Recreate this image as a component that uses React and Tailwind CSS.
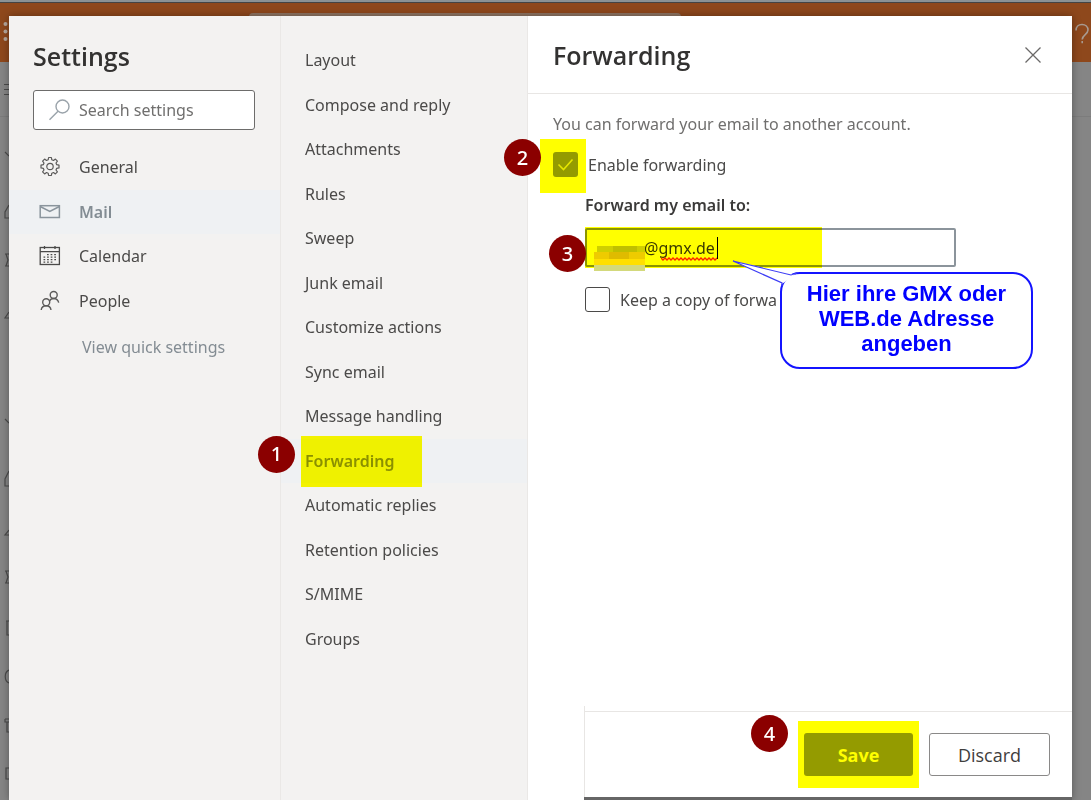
import React from "react";

const categories = [
  { name: "General", icon: GearIcon },
  { name: "Mail", icon: MailIcon, active: true },
  { name: "Calendar", icon: CalendarIcon },
  { name: "People", icon: PeopleIcon },
];

const pages = [
  "Layout",
  "Compose and reply",
  "Attachments",
  "Rules",
  "Sweep",
  "Junk email",
  "Customize actions",
  "Sync email",
  "Message handling",
  "Forwarding",
  "Automatic replies",
  "Retention policies",
  "S/MIME",
  "Groups",
];

function GearIcon() {
  return (
    <svg width="22" height="22" viewBox="0 0 22 22" fill="none" stroke="#5c5b5a" strokeWidth="1.2" strokeLinejoin="round" aria-hidden="true">
      <path d="M9.6 1.5h2.8l.4 2.3 1.7.7 1.9-1.4 2 2-1.4 1.9.7 1.7 2.3.4v2.8l-2.3.4-.7 1.7 1.4 1.9-2 2-1.9-1.4-1.7.7-.4 2.3H9.6l-.4-2.3-1.7-.7-1.9 1.4-2-2 1.4-1.9-.7-1.7-2.3-.4V9.1l2.3-.4.7-1.7-1.4-1.9 2-2 1.9 1.4 1.7-.7z" />
      <circle cx="11" cy="10.5" r="3.2" />
    </svg>
  );
}

function MailIcon() {
  return (
    <svg width="22" height="22" viewBox="0 0 22 22" fill="none" stroke="#8a949c" strokeWidth="1.5" aria-hidden="true">
      <rect x="1.2" y="4.7" width="19.2" height="11.8" />
      <path d="M1.2 5.5l9.6 5 9.6-5" />
    </svg>
  );
}

function CalendarIcon() {
  return (
    <svg width="22" height="22" viewBox="0 0 22 22" fill="none" stroke="#4b4a49" strokeWidth="1.3" aria-hidden="true">
      <rect x="1.2" y="2.5" width="19.2" height="17" />
      <path d="M1 6.7h19.5M5.5 1v3M16 1v3" />
      <path d="M8 9.7h9.5M4.500 12.200h13M4.500 14.700h13M4.500 17.100h9.500" strokeDasharray="1.7 1.9" />
    </svg>
  );
}

function PeopleIcon() {
  return (
    <svg width="22" height="22" viewBox="0 0 22 22" fill="none" stroke="#5c5b5a" strokeWidth="1.4" aria-hidden="true">
      <circle cx="14.7" cy="5" r="3.500" />
      <circle cx="7.2" cy="12.200" r="3.500" />
      <path d="M10.400 11.300c.8-1.700 2.300-2.800 4.300-2.800 2.700 0 4.400 1.600 5 4.200M2.200 20c.3-2.600 2.300-4.300 5-4.300s4.500 1.700 4.800 4.300" />
    </svg>
  );
}

function Badge({ n, className }) {
  return (
    <span className={`absolute z-10 flex size-[37px] items-center justify-center rounded-full bg-[#8b0000] text-xl leading-none font-medium text-white ${className}`}>
      {n}
    </span>
  );
}

function Backdrop() {
  return (
    <div className="absolute inset-0 bg-[#858585]" aria-hidden="true">
      <div className="h-[3px] border-b border-[#444] bg-[#8b9294]" />
      <div className="flex h-[59px] items-start justify-end bg-[#8e481c]">
        <div className="absolute top-[13px] left-[249px] h-4 w-[432px] rounded-sm bg-[#8f7563]" />
        <svg className="mt-[18px]" width="18" height="26" viewBox="0 0 18 26" fill="none" stroke="#a89a90" strokeWidth="1.6">
          <path d="M3 9.5C3 5.8 5.5 3.5 9 3.5s6 2.200 6 5.600c0 4.400-5.800 4.500-5.800 9.400M9.200 20v2.200" />
        </svg>
      </div>
      <div className="h-[55px] border-b border-[#7c7c7c]" />
      <svg className="absolute top-0 left-0" width="9" height="800" viewBox="0 0 9 800" fill="none" stroke="#4b4b4b" strokeWidth="1.2">
        <g fill="#b5a69b" stroke="none">
          <circle cx="5.500" cy="24" r="2" />
          <circle cx="5.500" cy="31.500" r="2" />
          <circle cx="5.500" cy="39" r="2" />
        </g>
        <path d="M4 84.500h5M4 89.500h5M4 94.500h5M5 152l4 4M9 205l-4 7v6h4M5 254h4M6 254l2 6-2 6M5 266h4M9 312l-4 6h4M5 419l4 4M9 471l-4 8v7h4M9 530l-4 5h4M5 571h4M6 571l2 6-2 6M5 583h4M6 621h3M7 621v14h2M9 670c-5 2-5 11 0 13M5 719h4M5 719v3h4M7 722v10h2M9 768H6v11h3" />
      </svg>
    </div>
  );
}

function CategoryNav() {
  return (
    <nav className="w-[272px] shrink-0 border-r border-[#eae8e6] bg-[#f3f2f1]" aria-label="Settings categories">
      <h1 className="mt-6 ml-6 font-['Open_Sans',sans-serif] text-[25px] leading-8 font-semibold text-[#333231]">Settings</h1>
      <div className="relative mt-[18px] mr-[25px] ml-6">
        <svg className="absolute top-2 left-[15px]" width="24" height="24" viewBox="0 0 24 24" fill="none" stroke="#9aa3aa" strokeWidth="1.4" aria-hidden="true">
          <circle cx="14.5" cy="8.5" r="6.5" />
          <path d="M10 13.2L1.5 21.7" />
        </svg>
        <input
          type="search"
          aria-label="Search settings"
          placeholder="Search settings"
          className="h-10 w-full rounded-[3px] border border-[#6d6c6b] bg-white pl-[45px] text-base text-[#333231] outline-none placeholder:text-[#706f6e]"
        />
      </div>
      <ul className="mt-[15px] grid h-[178px] auto-rows-fr">
        {categories.map(({ name, icon: Icon, active }) => (
          <li key={name}>
            <a
              href="#"
              aria-current={active ? "true" : undefined}
              className={`flex h-full items-center gap-[18px] pl-[30px] text-base ${active ? "bg-[#eff1f3] font-semibold text-[#838c93]" : "text-[#4b4a49]"}`}
            >
              <Icon />
              {name}
            </a>
          </li>
        ))}
      </ul>
      <a href="#" className="mt-3 ml-[73px] inline-block text-base leading-6 text-[#838c93]">
        View quick settings
      </a>
    </nav>
  );
}

function PageNav() {
  return (
    <nav className="w-[247px] shrink-0 border-r border-[#eae8e6] bg-[#f3f2f1]" aria-label="Mail settings">
      <ul className="mt-[22px] grid h-[623px] auto-rows-fr">
        {pages.map((name) => {
          const active = name === "Forwarding";
          return (
            <li key={name} className="relative">
              <a
                href="#"
                aria-current={active ? "page" : undefined}
                className={`flex h-full items-center pl-6 text-base ${active ? "bg-[#eff1f3] font-semibold text-[#8b9095]" : "text-[#4b4a49]"}`}
              >
                {name}
              </a>
              {active && (
                <>
                  <span className="pointer-events-none absolute -top-[3px] left-5 h-[51px] w-[121px] bg-[#ffff00] mix-blend-multiply" />
                  <Badge n={1} className="-top-[3px] -left-[23px]" />
                </>
              )}
            </li>
          );
        })}
      </ul>
    </nav>
  );
}

function Callout() {
  return (
    <div className="absolute top-[44px] left-[195px] z-10 flex h-[97px] w-[253px] justify-center rounded-[20px] border-2 border-[#1414ff] bg-white pt-[7px]">
      <svg className="absolute -top-[15px] -left-[51px]" width="70" height="40" viewBox="0 0 70 40" aria-hidden="true">
        <path d="M2 2L64 15.5L51 25Z" fill="#fff" />
        <path d="M51 27V24L2 2L60 16L66 14" fill="none" stroke="#3c3cf5" strokeWidth="1.2" />
      </svg>
      <p className="relative text-center font-['Liberation_Sans',Arial,sans-serif] text-[22px] leading-[25px] font-bold whitespace-nowrap text-[#0000ff]">
        Hier ihre GMX oder
        <br />
        WEB.de Adresse
        <br />
        angeben
      </p>
    </div>
  );
}

function ForwardingPanel() {
  return (
    <section className="flex min-w-0 flex-1 flex-col">
      <div className="flex min-h-0 flex-1 flex-col bg-white">
        <header className="flex h-[78px] items-center justify-between border-b border-[#e8e6e4] pr-[30px] pl-[25px]">
          <h2 className="font-['Open_Sans',sans-serif] text-[25px] leading-8 font-semibold text-[#333231]">Forwarding</h2>
          <button type="button" aria-label="Close" className="flex size-[18px] items-center justify-center">
            <svg width="18" height="18" viewBox="0 0 18 18" fill="none" stroke="#6a6968" strokeWidth="1.3" aria-hidden="true">
              <path d="M1.5 1.5l15 15M16.5 1.5l-15 15" />
            </svg>
          </button>
        </header>

        <div className="flex-1 pr-6 pl-[25px]">
          <p className="mt-[18px] text-base leading-6 text-[#706f6e]">You can forward your email to another account.</p>

          <div className="relative mt-[3px] -ml-[13px] flex h-[54px] items-start">
            <span className="h-full w-[46px] bg-[#ffff00] pt-[13px] pl-[13px]">
              <span className="relative block size-[25px]">
                <input id="enable" type="checkbox" defaultChecked className="block size-[25px] appearance-none rounded-[3px] bg-[#949b00]" />
                <svg className="pointer-events-none absolute inset-0" width="25" height="25" viewBox="0 0 25 25" fill="none" stroke="#e6e600" strokeWidth="1.6" aria-hidden="true">
                  <path d="M5.5 12.5l5 5L19.5 7.5" />
                </svg>
              </span>
            </span>
            <label htmlFor="enable" className="mt-[14px] ml-[2px] text-base leading-6 text-[#4b4a49]">
              Enable forwarding
            </label>
            <Badge n={2} className="top-0 -left-9" />
          </div>

          <div className="ml-8">
            <label htmlFor="address" className="block text-base leading-6 font-semibold text-[#3b3a39]">
              Forward my email to:
            </label>
            <div className="relative mt-[11px] w-[371px] max-w-full">
              <input
                id="address"
                type="text"
                spellCheck={false}
                defaultValue="@gmx.de"
                className="block h-[39px] w-full rounded-[2px] border-2 border-[#8b949b] bg-white pl-[57px] text-base text-[#3b3a39] outline-none"
              />
              <svg className="pointer-events-none absolute top-[15px] left-2" width="52" height="30" viewBox="0 0 52 30" aria-hidden="true">
                <rect x="4" y="3" width="48" height="6" fill="#cfcf20" />
                <rect x="20" y="3" width="24" height="6" fill="#bfbf10" />
                <rect x="1" y="9" width="51" height="7" fill="#eecb20" />
                <rect x="16" y="9" width="20" height="7" fill="#dfbb20" />
                <rect x="1" y="16" width="51" height="6" fill="#ffdf38" />
              </svg>
              <svg className="pointer-events-none absolute top-[29px] left-[76px]" width="57" height="5" viewBox="0 0 57 5" fill="none" stroke="#ff2020" strokeWidth="1.3" aria-hidden="true">
                <path d="M0 1l2 2 2-2 2 2 2-2 2 2 2-2 2 2 2-2 2 2 2-2 2 2 2-2 2 2 2-2 2 2 2-2 2 2 2-2 2 2 2-2 2 2 2-2 2 2 2-2 2 2 2-2 2 2 2-2" />
              </svg>
              <span className="pointer-events-none absolute top-[9px] left-[132px] h-[22px] w-px bg-black" />
              <span className="pointer-events-none absolute -top-px left-0 h-[41px] w-[237px] bg-[#ffff00] mix-blend-multiply" />
              <span className="pointer-events-none absolute top-[37px] left-[9px] h-[6px] w-[51px] bg-[#d3d97c]" />
              <Badge n={3} className="top-[7px] -left-9" />
              <Callout />
            </div>
            <div className="mt-5 flex items-center gap-[10px]">
              <input id="copy" type="checkbox" className="size-[25px] appearance-none rounded-[3px] border border-[#4b4a49] bg-white" />
              <label htmlFor="copy" className="text-base leading-6 text-[#4b4a49]">
                Keep a copy of forwa
              </label>
            </div>
          </div>
        </div>

        <footer className="relative ml-14 flex h-[86px] items-start justify-end gap-[10px] border-t border-l border-[#e8e6e4] pt-[9px] pr-[22px]">
          <span className="absolute -top-[6px] -left-px h-[6px] w-px bg-[#e8e6e4]" />
          <span className="relative bg-[#ffff00] px-[6px] py-3">
            <button type="button" className="block h-[43px] w-[109px] rounded-[3px] bg-[#949b00] font-['Open_Sans',sans-serif] text-lg font-bold text-[#ffff00]">
              Save
            </button>
            <Badge n={4} className="-top-[6px] -left-[47px]" />
          </span>
          <button type="button" className="mt-3 h-[43px] w-[121px] rounded-[3px] border border-[#8a8988] bg-white font-['Open_Sans',sans-serif] text-lg text-[#3f3e3d]">
            Discard
          </button>
        </footer>
      </div>
      <div className="flex h-[3px]">
        <div className="w-14 bg-white" />
        <div className="flex-1 bg-[#666]" />
      </div>
    </section>
  );
}

export default function App() {
  return (
    <div className="relative flex h-screen overflow-hidden pt-4 pr-[19px] pl-[9px] font-['Noto_Sans','Open_Sans',sans-serif]">
      <Backdrop />
      <main className="relative flex min-w-0 flex-1 shadow-[0_0_8px_rgba(0,0,0,0.35)]">
        <CategoryNav />
        <PageNav />
        <ForwardingPanel />
      </main>
    </div>
  );
}
